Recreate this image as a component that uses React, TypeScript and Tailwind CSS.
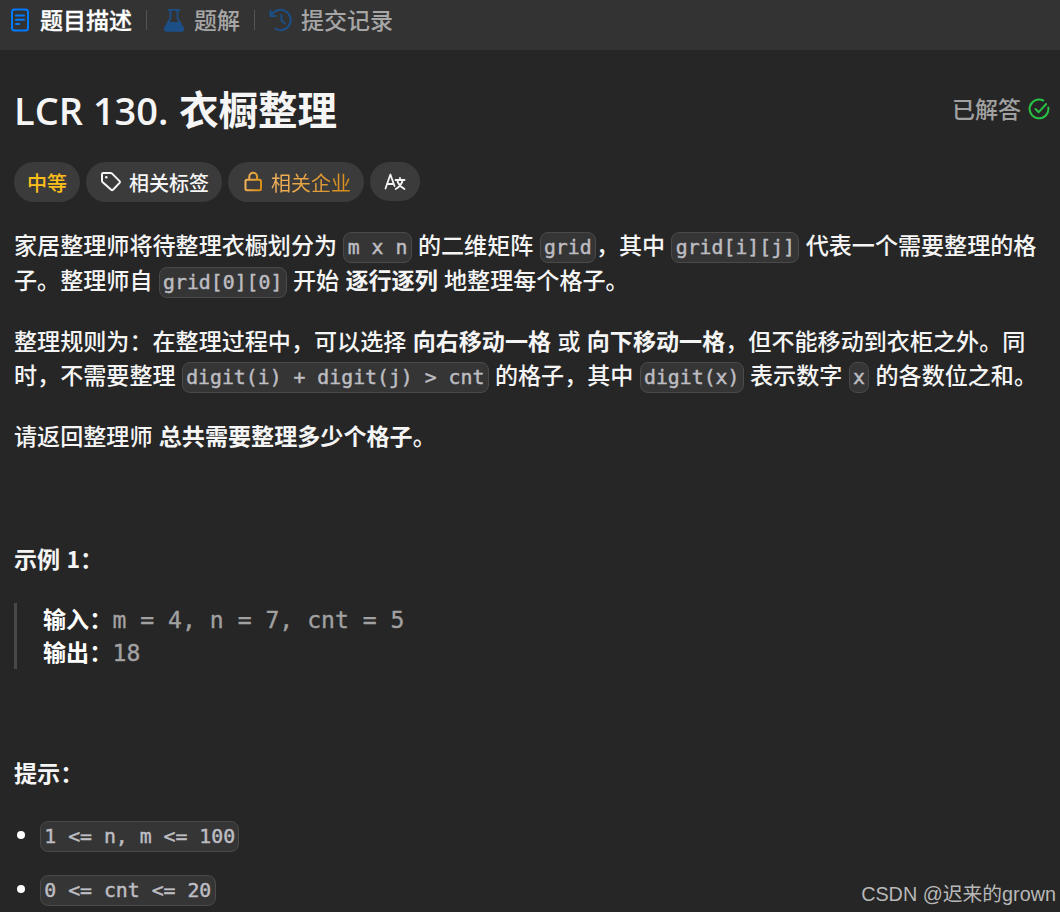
import type { ReactNode } from 'react'

function Code({ children }: { children: ReactNode }) {
  return (
    <code className="inline-block h-[31px] rounded-[8px] border border-[#4a4a4a] bg-[#353535] px-[3.3px] font-['DejaVu_Sans_Mono','Noto_Sans_CJK_SC',monospace] text-[19.82px] leading-[29px] font-normal whitespace-pre text-[#bdbdc2] [word-spacing:0] [-webkit-text-stroke:0.45px_#bdbdc2]">
      {children}
    </code>
  )
}

function DocIcon() {
  return (
    <svg width="20" height="24" viewBox="0 0 20 24" fill="none" stroke="#007bff" strokeWidth="2" strokeLinecap="round">
      <rect x="2" y="1.5" width="16" height="21" rx="2.5" />
      <path d="M6 7.5h8M6 11.8h8M6 16h3" />
    </svg>
  )
}

function FlaskIcon() {
  return (
    <svg width="22" height="24" viewBox="0 0 22 24" fill="none" stroke="#1d4f87" strokeWidth="1.8" strokeLinejoin="round">
      <path d="M5 1.8h12M7.5 2v8L2 20.5c-.6 1.2-.2 2 1 2h16c1.2 0 1.6-.8 1-2L14.5 10V2" />
      <path d="M5.2 15h11.6l3.4 6.2c.2.7 0 1.3-.9 1.3H3c-.9 0-1.2-.6-.9-1.3z" fill="#1d4f87" />
    </svg>
  )
}

function HistoryIcon() {
  return (
    <svg width="24" height="24" viewBox="0 0 24 24" fill="none" stroke="#1d4f87" strokeWidth="2" strokeLinecap="round" strokeLinejoin="round">
      <path d="M1.5 2.5v5.5h5.5M2.3 7.5A10.2 10.2 0 1 1 6.5 20.8" />
      <path d="M12.5 7v5.5l3.2 2.7" />
    </svg>
  )
}

function TagIcon() {
  return (
    <svg width="22" height="22" viewBox="0 0 22 22" fill="none" stroke="#f5f5f5" strokeWidth="2" strokeLinejoin="round">
      <path d="M2 3.2Q2 2 3.2 2H10.6q.9 0 1.5.6L19.6 10.1q.9.9 0 1.8L13 18.7q-.9.9-1.8 0L2.7 11.2Q2 10.6 2 9.7z" />
      <circle cx="6.3" cy="6.3" r="1.3" fill="#f5f5f5" stroke="none" />
    </svg>
  )
}

function LockIcon() {
  return (
    <svg width="20" height="22" viewBox="0 0 20 22" fill="none" stroke="url(#lock)" strokeWidth="2">
      <defs>
        <linearGradient id="lock" gradientUnits="userSpaceOnUse" x1="1" y1="11" x2="19" y2="15">
          <stop stopColor="#f5b55e" />
          <stop offset="1" stopColor="#d48b12" />
        </linearGradient>
      </defs>
      <rect x="2.5" y="8.7" width="15.5" height="10.6" rx="1.5" />
      <path d="M6.3 8.5V5.6a3.9 3.9 0 0 1 7.8 0V8.5" />
    </svg>
  )
}

function TranslateIcon() {
  return (
    <svg width="22" height="20" viewBox="0 0 22 20" fill="none" stroke="#f5f5f5" strokeWidth="1.8" strokeLinecap="round" strokeLinejoin="round">
      <path d="M1.5 16.5L6.4 2.5L10.5 14M3 12h6" />
      <path d="M11.5 8h9M16 5.8V8M18.7 8c-.8 4.3-3.5 7-7 9M13.2 8c.8 4.3 3.8 7 7.3 9" />
    </svg>
  )
}

function SolvedIcon() {
  return (
    <svg width="22" height="22" viewBox="0 0 22 22" fill="none" stroke="#28c244" strokeWidth="2" strokeLinecap="round" strokeLinejoin="round">
      <path d="M15.2 2.5A9.4 9.4 0 1 0 20.3 9.5" />
      <path d="M7.5 11l3.2 3.2L18.2 6" />
    </svg>
  )
}

function Divider() {
  return <div className="h-5 w-px bg-[#555]" />
}

const PILL = 'flex h-10 items-center rounded-full bg-[#3b3b3b]'
const LINE = 'h-[34.5px] whitespace-nowrap'
const HINTS = ['1 <= n, m <= 100', '0 <= cnt <= 20']
const EXAMPLE = [
  { label: '输入：', value: 'm = 4, n = 7, cnt = 5' },
  { label: '输出：', value: '18' },
]

export default function App() {
  return (
    <div className="relative h-[912px] w-[1060px] overflow-hidden bg-[#262626] font-['Noto_Sans_CJK_SC',sans-serif] text-[#f5f5f5]">
      <header className="flex h-[50px] items-start bg-[#333] text-[23px] leading-[38px] font-medium text-[#a6a6a6]">
        <div className="flex h-10 w-[146px] items-center gap-[10px] pl-[10px] text-white">
          <DocIcon />
          <span className="-mt-[2px] [-webkit-text-stroke:0.3px_white]">题目描述</span>
        </div>
        <div className="flex h-10 items-center">
          <Divider />
          <div className="flex w-[107px] items-center gap-[9px] pl-4">
            <FlaskIcon />
            <span className="-mt-[2px]">题解</span>
          </div>
          <Divider />
          <div className="flex items-center gap-2 pl-[14px]">
            <HistoryIcon />
            <span className="-mt-[2px]">提交记录</span>
          </div>
        </div>
      </header>

      <main className="px-[14px]">
        <div className="flex h-[112px] items-center justify-between pt-[5px]">
          <h1 className="flex items-baseline text-[39.5px] leading-[60px] font-bold">
            <span className="w-[165px] font-['Open_Sans','Noto_Sans',sans-serif] text-[38px] font-semibold whitespace-nowrap">LCR 130.</span>
            <span>衣橱整理</span>
          </h1>
          <div className="-mr-[4px] flex items-center gap-[7px] text-[23px] font-medium text-[#a1a1a1]">
            <span>已解答</span>
            <SolvedIcon />
          </div>
        </div>

        <div className="flex gap-[6px] text-[20px] font-medium">
          <div className={`${PILL} w-[66px] justify-center pt-px text-[#fbbf1c]`}>中等</div>
          <div className={`${PILL} w-[136px] gap-[7px] pl-[14px]`}>
            <TagIcon />
            <span className="pt-px">相关标签</span>
          </div>
          <div className={`${PILL} w-[136px] gap-[8px] pl-[15px]`}>
            <LockIcon />
            <span className="bg-gradient-to-r from-[#f5b55e] to-[#d48b12] bg-clip-text pt-px font-normal text-transparent">相关企业</span>
          </div>
          <div className={`${PILL} h-[39px] w-[50px] justify-center`}>
            <TranslateIcon />
          </div>
        </div>

        <div className="pt-[25px] text-[23.08px] leading-[34.5px] font-medium [word-spacing:1.1px]">
          <p className={LINE}>家居整理师将待整理衣橱划分为 <Code>m x n</Code> 的二维矩阵 <Code>grid</Code>，其中 <Code>grid[i][j]</Code> 代表一个需要整理的格</p>
          <p className={LINE}>子。整理师自 <Code>grid[0][0]</Code> 开始 <b>逐行逐列</b> 地整理每个格子。</p>
          <p className={`${LINE} mt-[26.5px]`}>整理规则为：在整理过程中，可以选择 <b>向右移动一格</b> 或 <b>向下移动一格</b>，但不能移动到衣柜之外。同</p>
          <p className={LINE}>时，不需要整理 <Code>digit(i) + digit(j) &gt; cnt</Code> 的格子，其中 <Code>digit(x)</Code> 表示数字 <Code>x</Code> 的各数位之和。</p>
          <p className={`${LINE} mt-[26px]`}>请返回整理师 <b>总共需要整理多少个格子</b>。</p>

          <p className={`${LINE} mt-[89px] font-bold`}>示例 1：</p>
          <blockquote className="mt-[27.5px] border-l-[3px] border-[#484848] pl-[26px]">
            {EXAMPLE.map(row => (
              <div key={row.label} className="flex h-[33px] items-baseline leading-[30px]">
                <b className="w-[69.5px] text-white">{row.label}</b>
                <code className="font-['DejaVu_Sans_Mono',monospace] text-[23.1px] leading-[30px] font-normal whitespace-pre text-[#a1a1a1] [word-spacing:0] [-webkit-text-stroke:0.35px_#a1a1a1]">{row.value}</code>
              </div>
            ))}
          </blockquote>

          <p className={`${LINE} mt-[86px] font-bold`}>提示：</p>
          <ul className="mt-[31px] flex flex-col gap-[23px]">
            {HINTS.map(hint => (
              <li key={hint} className="flex h-[31px] items-center gap-[15px] pl-[3px]">
                <span className="mb-[2px] size-2 rounded-full bg-white" />
                <Code>{hint}</Code>
              </li>
            ))}
          </ul>
        </div>
      </main>

      <div className="absolute right-[4px] bottom-[2px] font-['Liberation_Sans','Noto_Sans_CJK_SC',sans-serif] text-[19.8px] leading-[32px] whitespace-nowrap text-[#b8b8b8]">
        CSDN @迟来的grown
      </div>
    </div>
  )
}
